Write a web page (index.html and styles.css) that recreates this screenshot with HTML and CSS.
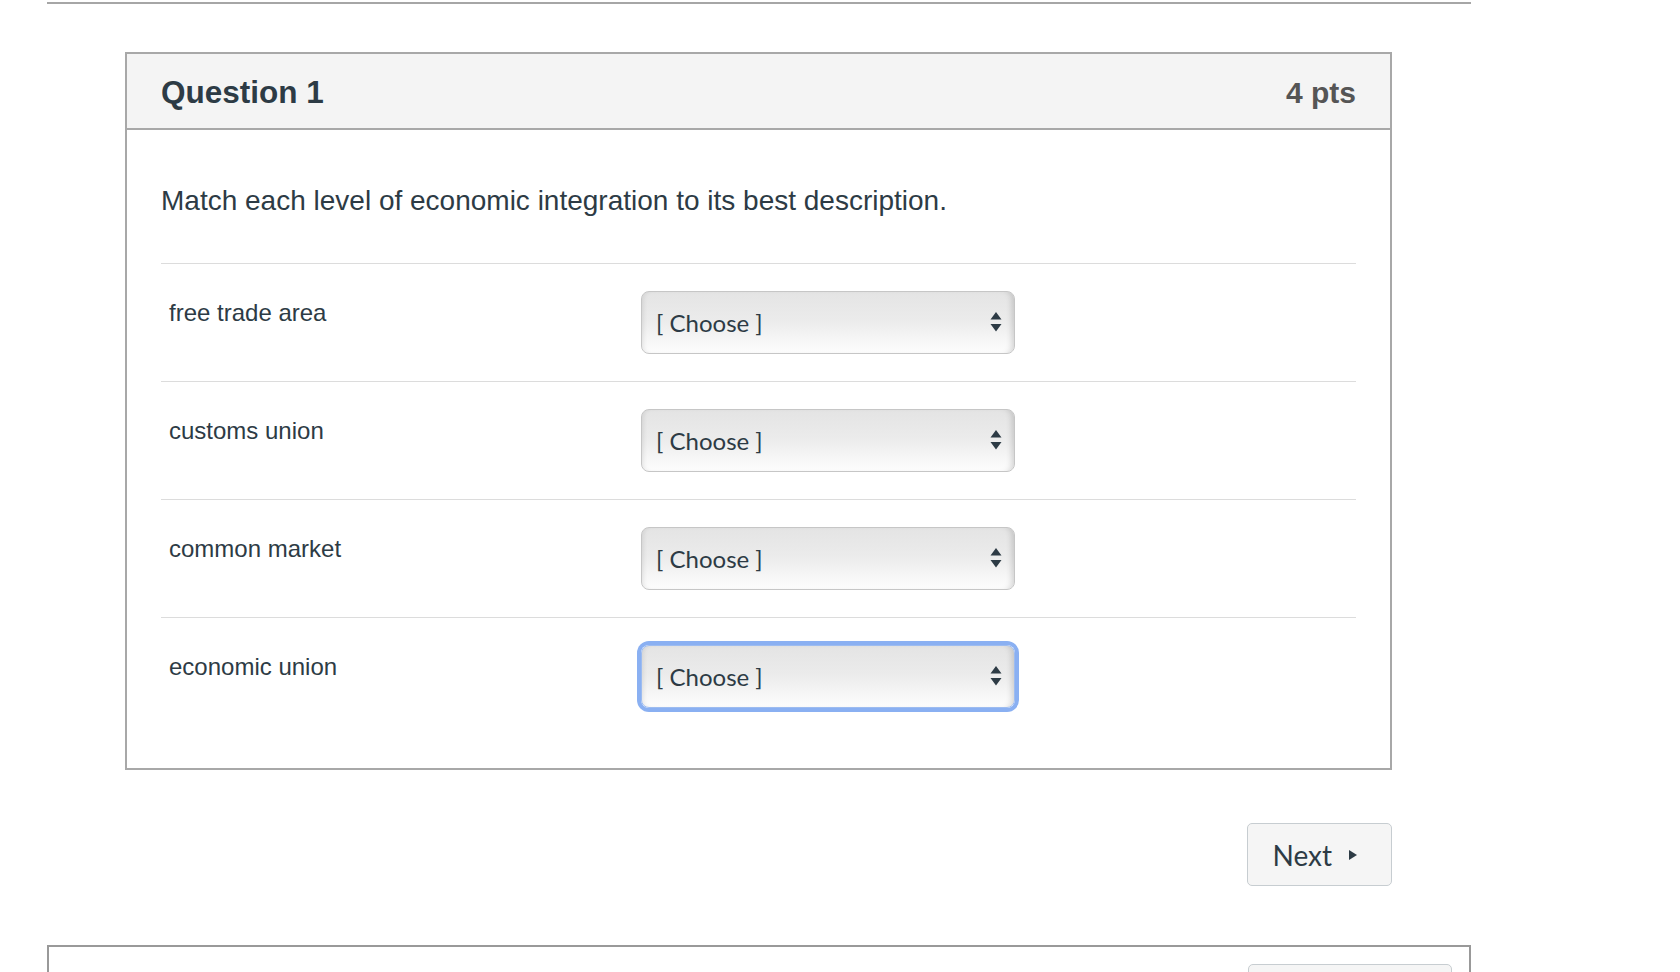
FILE: index.html
```html
<!DOCTYPE html>
<html lang="en">
<head>
    <meta charset="UTF-8">
    <meta name="viewport" content="width=device-width, initial-scale=1.0">
    <title>Quiz - Question 1</title>
    <link rel="stylesheet" href="styles.css">
</head>
<body>
    <div class="page">
        <div class="top-rule"></div>

        <div class="quiz-area">
            <div class="question">
                <div class="question-header">
                    <h2 class="question-name">Question 1</h2>
                    <span class="question-points">4 pts</span>
                </div>
                <div class="question-body">
                    <p class="question-text">Match each level of economic integration to its best description.</p>

                    <div class="answer-row">
                        <div class="answer-label">free trade area</div>
                        <div class="select-wrap">
                            <select class="answer-select" name="answer_1">
                                <option>[ Choose ]</option>
                            </select>
                            <svg class="select-arrows" width="12" height="20" viewBox="0 0 12 20"><path d="M6 0 L11.5 7.5 H0.5 Z M0.5 12 H11.5 L6 19.5 Z" fill="#2d3b45"/></svg>
                        </div>
                    </div>
                    <div class="answer-row">
                        <div class="answer-label">customs union</div>
                        <div class="select-wrap">
                            <select class="answer-select" name="answer_2">
                                <option>[ Choose ]</option>
                            </select>
                            <svg class="select-arrows" width="12" height="20" viewBox="0 0 12 20"><path d="M6 0 L11.5 7.5 H0.5 Z M0.5 12 H11.5 L6 19.5 Z" fill="#2d3b45"/></svg>
                        </div>
                    </div>
                    <div class="answer-row">
                        <div class="answer-label">common market</div>
                        <div class="select-wrap">
                            <select class="answer-select" name="answer_3">
                                <option>[ Choose ]</option>
                            </select>
                            <svg class="select-arrows" width="12" height="20" viewBox="0 0 12 20"><path d="M6 0 L11.5 7.5 H0.5 Z M0.5 12 H11.5 L6 19.5 Z" fill="#2d3b45"/></svg>
                        </div>
                    </div>
                    <div class="answer-row">
                        <div class="answer-label">economic union</div>
                        <div class="select-wrap">
                            <select class="answer-select is-focused" name="answer_4">
                                <option>[ Choose ]</option>
                            </select>
                            <svg class="select-arrows" width="12" height="20" viewBox="0 0 12 20"><path d="M6 0 L11.5 7.5 H0.5 Z M0.5 12 H11.5 L6 19.5 Z" fill="#2d3b45"/></svg>
                        </div>
                    </div>
                </div>
            </div>

            <div class="nav-row">
                <button class="next-button" type="button">
                    Next
                    <svg class="next-caret" width="8" height="10" viewBox="0 0 8 10"><path d="M0 0 L8 5 L0 10 Z" fill="#2d3b45"/></svg>
                </button>
            </div>
        </div>

        <div class="next-section">
            <div class="ghost-button"></div>
        </div>
    </div>
</body>
</html>
```

FILE: styles.css
```css
body {
    margin: 0;
    font-family: "Liberation Sans", Arial, sans-serif;
    color: #2d3b45;
    background: #fff;
}
.page {
    width: 1424px;
    margin-left: 47px;
    padding-top: 2px;
}
.top-rule {
    height: 2px;
    background-color: #a6a6a6;
}
.quiz-area {
    padding: 48px 79px 0 78px;
}
.question {
    border: 2px solid #a8a8a8;
}
.question-header {
    display: flex;
    justify-content: space-between;
    align-items: baseline;
    height: 76px;
    padding: 0 34px;
    box-sizing: border-box;
    background-color: #f4f4f4;
    border-bottom: 2px solid #a8a8a8;
    line-height: 76px;
}
.question-name {
    margin: 0;
    font-size: 31.5px;
    font-weight: bold;
    color: #2d3b45;
}
.question-points {
    font-size: 30px;
    font-weight: bold;
    color: #555;
}
.question-body {
    padding: 51px 34px 33px;
}
.question-text {
    margin: 0 0 43px;
    font-size: 28px;
    line-height: 39px;
}
.answer-row {
    display: flex;
    align-items: flex-start;
    padding: 27px 0;
    border-top: 1px solid #dcdcdc;
}
.answer-label {
    width: 480px;
    box-sizing: border-box;
    padding: 4px 0 0 8px;
    font-size: 24px;
    line-height: 36px;
}
.select-wrap {
    position: relative;
    width: 374px;
}
.answer-select {
    display: block;
    width: 100%;
    height: 63px;
    padding: 0 40px 0 14px;
    font-family: Lato, "Liberation Sans", sans-serif;
    font-size: 24px;
    color: #2d3b45;
    -webkit-appearance: none;
    appearance: none;
    border: 1px solid #c6c6c6;
    border-radius: 8px;
    background: linear-gradient(to bottom, #e4e4e4 0%, #ebebeb 45%, #fdfdfd 100%);
    box-shadow: inset 5px 0 5px -4px rgba(0, 0, 0, 0.10), inset -6px 0 6px -4px rgba(0, 0, 0, 0.16);
    outline: none;
}
.answer-select.is-focused {
    border-color: #9dbcf0;
    box-shadow: 0 0 0 4px #8ab0f2, inset 5px 0 5px -4px rgba(0, 0, 0, 0.10), inset -6px 0 6px -4px rgba(0, 0, 0, 0.16);
}
.select-arrows {
    position: absolute;
    right: 13px;
    top: 21px;
    pointer-events: none;
}
.nav-row {
    display: flex;
    justify-content: flex-end;
    padding-top: 53px;
}
.next-button {
    display: flex;
    align-items: center;
    height: 63px;
    padding: 0 34px 0 24px;
    font-family: Lato, "Liberation Sans", sans-serif;
    font-size: 28px;
    color: #2d3b45;
    background-color: #f5f5f5;
    border: 1px solid #c7cdd1;
    border-radius: 5px;
    cursor: pointer;
}
.next-caret {
    margin-left: 17px;
}
.next-section {
    display: flex;
    justify-content: flex-end;
    margin-top: 59px;
    padding: 17px 17px 0;
    height: 120px;
    border: 2px solid #999;
    border-bottom: none;
}
.ghost-button {
    width: 202px;
    height: 60px;
    background-color: #f5f5f5;
    border: 1px solid #c7cdd1;
    border-radius: 5px;
}
```
